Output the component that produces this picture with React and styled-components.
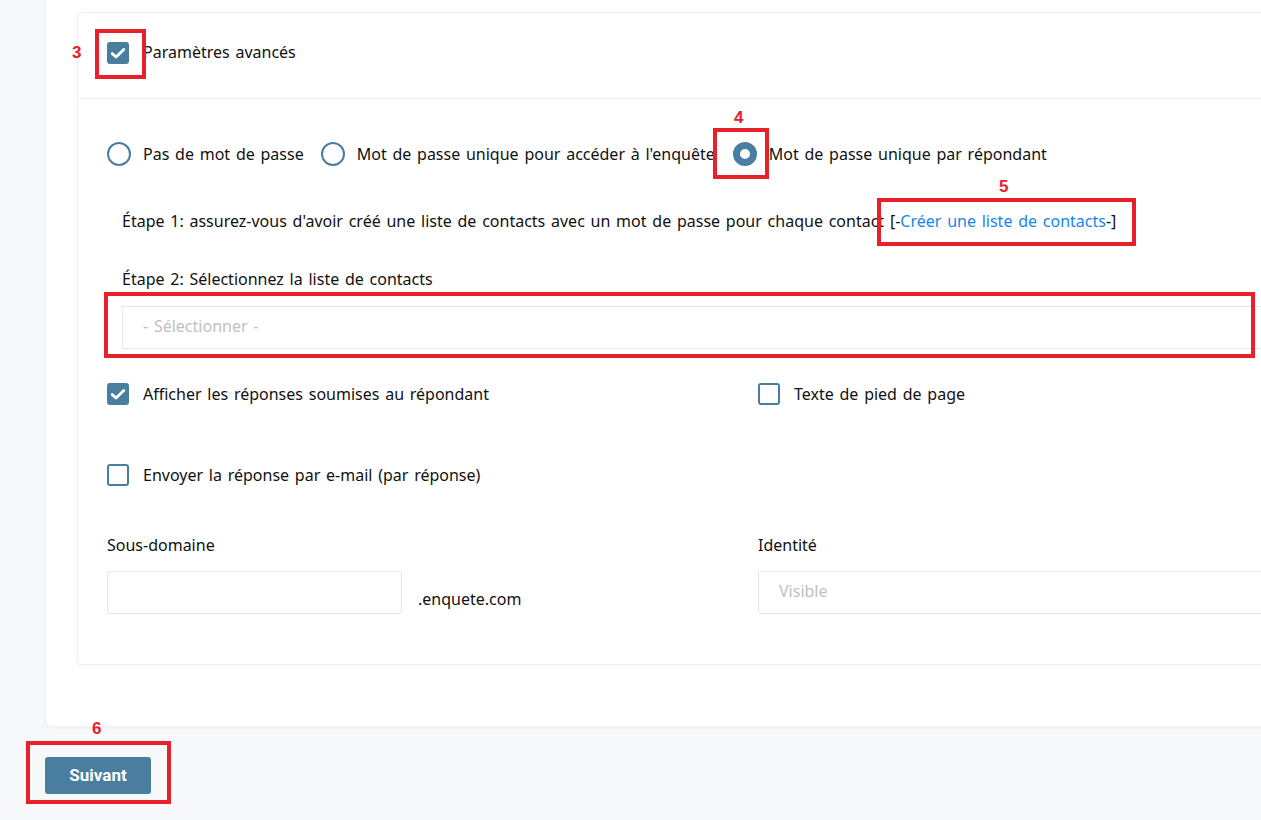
import React from "react";
import styled, { createGlobalStyle } from "styled-components";

const Global = createGlobalStyle`
  html, body { margin: 0; padding: 0; }
  body {
    background: #f7f8fa;
    font-family: "Noto Sans", "Open Sans", sans-serif;
    color: #111;
  }
`;

const PRIMARY = "#4a7ea0";

const Page = styled.div`
  position: relative;
  width: 1261px;
  height: 820px;
  overflow: hidden;
  background: #f7f8fa;
  word-spacing: 1.6px;
`;

const Panel = styled.div`
  margin-left: 46px;
  width: 1300px;
  padding: 12px 0 61px 31px;
  background: #fff;
  border-radius: 0 0 6px 6px;
  box-shadow: 0 1px 4px rgba(30, 40, 60, 0.06);
  box-sizing: border-box;
`;

const Card = styled.div`
  width: 1260px;
  border: 1px solid #eef0f3;
  border-radius: 4px;
  box-shadow: 0 1px 3px rgba(30, 40, 60, 0.05);
  box-sizing: border-box;
`;

const CardHeader = styled.div`
  display: flex;
  align-items: center;
  gap: 14px;
  padding: 29px 29px 34px;
  border-bottom: 1px solid #eef0f3;
  font-size: 16px;
  line-height: 22px;
`;

const HeaderTitle = styled.span`
  margin-top: -2px;
`;

const CardBody = styled.div`
  display: flex;
  flex-direction: column;
  padding: 43px 0 50px 29px;
  font-size: 16px;
  line-height: 24px;
`;

const Box = styled.span`
  width: 22px;
  height: 22px;
  flex: none;
  box-sizing: border-box;
  border-radius: 3px;
  border: 2px solid ${PRIMARY};
  background: ${(p) => (p.$checked ? PRIMARY : "#fff")};
  display: inline-flex;
  align-items: center;
  justify-content: center;
`;

const Check = ({ checked }) => (
  <Box $checked={checked}>
    {checked && (
      <svg width="16" height="14" viewBox="0 0 16 14">
        <path
          d="M2.2 7.6 L6 11 L13.8 3.4"
          fill="none"
          stroke="#fff"
          strokeWidth="2.8"
          strokeLinecap="round"
          strokeLinejoin="round"
        />
      </svg>
    )}
  </Box>
);

const RadioRow = styled.div`
  display: flex;
  align-items: center;
  height: 24px;
`;

const RadioOption = styled.label`
  display: flex;
  align-items: center;
  gap: 12px;
  margin-right: ${(p) => p.$gap}px;
  white-space: nowrap;
`;

const RadioCircle = styled.span`
  width: 24px;
  height: 24px;
  box-sizing: border-box;
  border-radius: 50%;
  flex: none;
  border: ${(p) => (p.$checked ? `7px solid ${PRIMARY}` : `2px solid ${PRIMARY}`)};
  background: #fff;
`;

const StepText = styled.div`
  margin-left: 15px;
  margin-top: ${(p) => p.$mt}px;
  white-space: nowrap;
`;

const Link = styled.a`
  color: #1a84ee;
  text-decoration: none;
`;

const SelectBox = styled.div`
  margin: 15px 0 0 15px;
  width: 1200px;
  height: 43px;
  box-sizing: border-box;
  border: 1px solid #e6e7ea;
  padding: 0 0 3px 20px;
  display: flex;
  align-items: center;
  color: #c0c0c4;
`;

const Grid = styled.div`
  display: grid;
  grid-template-columns: 651px 1fr;
  margin-top: ${(p) => p.$mt}px;
`;

const CheckRow = styled.label`
  display: flex;
  align-items: center;
  gap: 14px;
  height: 24px;
  white-space: nowrap;
`;

const Field = styled.div`
  display: flex;
  flex-direction: column;
  gap: 14px;
`;

const FieldLabel = styled.div`
  line-height: 24px;
`;

const InputLine = styled.div`
  display: flex;
  align-items: flex-end;
  gap: 16px;
`;

const TextInput = styled.div`
  width: ${(p) => p.$w};
  height: 43px;
  box-sizing: border-box;
  border: 1px solid #e6e7ea;
  border-radius: 2px;
  padding: 0 0 3px 20px;
  display: flex;
  align-items: center;
  color: #c0c0c4;
`;

const Suffix = styled.span`
  line-height: 24px;
  margin-bottom: 3px;
`;

const Footer = styled.div`
  padding: 31px 0 0 45px;
`;

const Button = styled.button`
  width: 106px;
  height: 37px;
  border: none;
  border-radius: 3px;
  background: ${PRIMARY};
  color: #fff;
  font-family: "Roboto", "Liberation Sans", sans-serif;
  font-weight: 700;
  font-size: 17px;
  padding: 0 0 2px;
`;

const Mark = styled.div`
  position: absolute;
  left: ${(p) => p.$x}px;
  top: ${(p) => p.$y}px;
  width: ${(p) => p.$w}px;
  height: ${(p) => p.$h}px;
  border: 4px solid #e8202a;
  box-sizing: border-box;
  pointer-events: none;
`;

const MarkNum = styled.div`
  position: absolute;
  left: ${(p) => p.$x}px;
  top: ${(p) => p.$y}px;
  color: #e8202a;
  font-family: "Liberation Sans", sans-serif;
  font-weight: 700;
  font-size: 17px;
  line-height: 20px;
`;

export default function App() {
  return (
    <>
      <Global />
      <Page>
        <Panel>
          <Card>
            <CardHeader>
              <Check checked />
              <HeaderTitle>Paramètres avancés</HeaderTitle>
            </CardHeader>
            <CardBody>
              <RadioRow>
                <RadioOption $gap={17}>
                  <RadioCircle />
                  Pas de mot de passe
                </RadioOption>
                <RadioOption $gap={18}>
                  <RadioCircle />
                  Mot de passe unique pour accéder à l'enquête
                </RadioOption>
                <RadioOption $gap={0}>
                  <RadioCircle $checked />
                  Mot de passe unique par répondant
                </RadioOption>
              </RadioRow>
              <StepText $mt={43}>
                Étape 1: assurez-vous d'avoir créé une liste de contacts avec un mot de passe pour chaque contact [-
                <Link>Créer une liste de contacts</Link>-]
              </StepText>
              <StepText $mt={34}>Étape 2: Sélectionnez la liste de contacts</StepText>
              <SelectBox>- Sélectionner -</SelectBox>
              <Grid $mt={33}>
                <CheckRow>
                  <Check checked />
                  Afficher les réponses soumises au répondant
                </CheckRow>
                <CheckRow>
                  <Check />
                  Texte de pied de page
                </CheckRow>
              </Grid>
              <Grid $mt={57}>
                <CheckRow>
                  <Check />
                  Envoyer la réponse par e-mail (par réponse)
                </CheckRow>
              </Grid>
              <Grid $mt={46}>
                <Field>
                  <FieldLabel>Sous-domaine</FieldLabel>
                  <InputLine>
                    <TextInput $w="295px" />
                    <Suffix>.enquete.com</Suffix>
                  </InputLine>
                </Field>
                <Field>
                  <FieldLabel>Identité</FieldLabel>
                  <TextInput $w="520px">Visible</TextInput>
                </Field>
              </Grid>
            </CardBody>
          </Card>
        </Panel>
        <Footer>
          <Button>Suivant</Button>
        </Footer>

        <Mark $x={95} $y={29} $w={51} $h={50} />
        <MarkNum $x={72} $y={43}>3</MarkNum>
        <Mark $x={713} $y={128} $w={56} $h={51} />
        <MarkNum $x={734} $y={108}>4</MarkNum>
        <Mark $x={877} $y={198} $w={259} $h={48} />
        <MarkNum $x={999} $y={177}>5</MarkNum>
        <Mark $x={104} $y={292} $w={1151} $h={66} />
        <Mark $x={26} $y={741} $w={145} $h={63} />
        <MarkNum $x={92} $y={719}>6</MarkNum>
      </Page>
    </>
  );
}
